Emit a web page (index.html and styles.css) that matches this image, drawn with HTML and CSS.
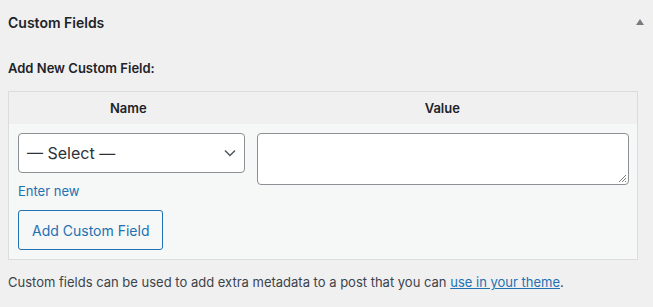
FILE: index.html
```html
<!DOCTYPE html>
<html lang="en">
<head>
    <meta charset="UTF-8">
    <title>Custom Fields</title>
    <link rel="stylesheet" href="styles.css">
</head>
<body>
    <div class="postbox">
        <div class="postbox-header">
            <h2>Custom Fields</h2>
            <span class="toggle-arrow"></span>
        </div>
        <div class="inside">
            <p class="add-title">Add New Custom Field:</p>
            <table class="newmeta">
                <thead>
                    <tr>
                        <th class="left">Name</th>
                        <th>Value</th>
                    </tr>
                </thead>
                <tbody>
                    <tr>
                        <td class="left">
                            <div class="select-box">
                                <span>— Select —</span>
                                <svg width="12" height="8" viewBox="0 0 12 8"><path d="M1 1.5l5 5 5-5" fill="none" stroke="#50575e" stroke-width="1.5"/></svg>
                            </div>
                            <a href="#" class="enter-new">Enter new</a>
                            <button class="add-button">Add Custom Field</button>
                        </td>
                        <td>
                            <div class="value-box">
                                <svg class="grip" width="9" height="9" viewBox="0 0 9 9"><path d="M1 8L8 1M4 8L8 4M7 8L8 7" stroke="#777" stroke-width="1"/></svg>
                            </div>
                        </td>
                    </tr>
                </tbody>
            </table>
            <p class="note">Custom fields can be used to add extra metadata to a post that you can <a href="#">use in your theme</a>.</p>
        </div>
    </div>
</body>
</html>
```

FILE: styles.css
```css
html{
    background-color: #f0f0f1;
}

body{
    margin: 0;
    font-family: Inter, "Liberation Sans", sans-serif;
    font-size: 13px;
    color: #1d2327;
}

.postbox-header{
    display: flex;
    align-items: center;
    justify-content: space-between;
    height: 44px;
    padding: 0 9px 0 8px;
}

.postbox-header h2{
    margin: 0;
    font-size: 14px;
    font-weight: 600;
}

.toggle-arrow{
    width: 0;
    height: 0;
    border-left: 4px solid transparent;
    border-right: 4px solid transparent;
    border-bottom: 6px solid #787c82;
}

.inside{
    padding: 0 15px 0 8px;
}

.add-title{
    margin: 16px 0 15px;
    font-weight: 600;
}

.newmeta{
    width: 100%;
    border: 1px solid #dcdcde;
    border-spacing: 0;
    background-color: #f6f7f7;
}

.newmeta th{
    background-color: #f0f0f1;
    font-weight: 600;
    padding: 6px 8px 7px;
    height: 19px;
}

.newmeta th.left{
    width: 38%;
}

.newmeta td{
    vertical-align: top;
    padding: 9px 8px 9px 9px;
}

.newmeta td.left{
    padding-right: 3px;
}

.select-box{
    display: flex;
    align-items: center;
    justify-content: space-between;
    box-sizing: border-box;
    height: 40px;
    padding: 0 8px 0 8px;
    background-color: #fff;
    border: 1px solid #8c8f94;
    border-radius: 4px;
    font-size: 16px;
    color: #2c3338;
}

.enter-new{
    display: block;
    margin-top: 10px;
    color: #2271b1;
    text-decoration: none;
}

.add-button{
    display: block;
    margin-top: 11px;
    height: 40px;
    padding: 0 13px;
    font-family: inherit;
    font-size: 14px;
    color: #2271b1;
    background-color: #f6f7f7;
    border: 1px solid #2271b1;
    border-radius: 3px;
}

.value-box{
    position: relative;
    box-sizing: border-box;
    height: 52px;
    background-color: #fff;
    border: 1px solid #8c8f94;
    border-radius: 4px;
}

.grip{
    position: absolute;
    right: 1px;
    bottom: 1px;
}

.note{
    margin: 14px 0;
    color: #3c434a;
}

.note a{
    color: #2271b1;
}
```
